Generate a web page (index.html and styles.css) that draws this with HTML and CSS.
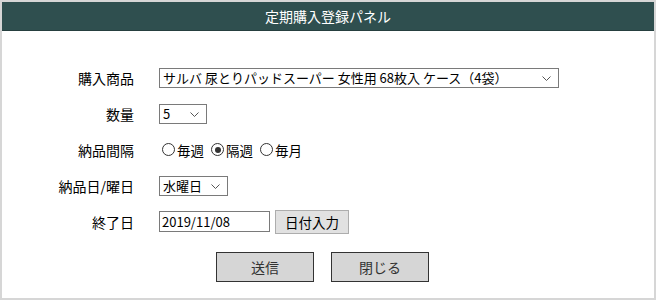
FILE: index.html
```html
<!DOCTYPE html>
<html lang="ja">
  <head>
    <meta charset="UTF-8" />
    <meta name="viewport" content="width=device-width, initial-scale=1.0" />
    <title>定期購入登録パネル</title>
    <link rel="stylesheet" href="styles.css">
  </head>
  <body>
    <div class="panel">
      <header class="panel_title">定期購入登録パネル</header>
      <form class="panel_body">
        <div class="rows">
          <label>購入商品</label>
          <div class="sel sel_item">
            <select>
              <option>サルバ 尿とりパッドスーパー 女性用 68枚入 ケース（4袋）</option>
            </select>
            <svg class="chev" width="9" height="5" viewBox="0 0 9 5"><path d="M0.5 0.5 L4.5 4.5 L8.5 0.5" fill="none" stroke="#555" stroke-width="1"/></svg>
          </div>

          <label>数量</label>
          <div class="sel sel_num">
            <select>
              <option>5</option>
            </select>
            <svg class="chev" width="9" height="5" viewBox="0 0 9 5"><path d="M0.5 0.5 L4.5 4.5 L8.5 0.5" fill="none" stroke="#555" stroke-width="1"/></svg>
          </div>

          <label>納品間隔</label>
          <div class="radios">
            <label class="radio"><input type="radio" name="span" />毎週</label>
            <label class="radio"><input type="radio" name="span" checked />隔週</label>
            <label class="radio"><input type="radio" name="span" />毎月</label>
          </div>

          <label>納品日/曜日</label>
          <div class="sel sel_day">
            <select>
              <option>水曜日</option>
            </select>
            <svg class="chev" width="9" height="5" viewBox="0 0 9 5"><path d="M0.5 0.5 L4.5 4.5 L8.5 0.5" fill="none" stroke="#555" stroke-width="1"/></svg>
          </div>

          <label>終了日</label>
          <div class="date">
            <input type="text" value="2019/11/08" />
            <button type="button" class="btn_small">日付入力</button>
          </div>
        </div>

        <div class="actions">
          <button type="button" class="btn">送信</button>
          <button type="button" class="btn">閉じる</button>
        </div>
      </form>
    </div>
  </body>
</html>
```

FILE: styles.css
```css
* {
  box-sizing: border-box;
}
body {
  margin: 0;
  font-family: "Noto Sans CJK JP", "Noto Sans", sans-serif;
  font-size: 13px;
  color: #000;
  background: #fff;
}

.panel {
  width: 656px;
  height: 300px;
  border: 2px solid #d6d6d6;
  background: #fff;
}
.panel_title {
  height: 29px;
  line-height: 28px;
  background: #2f4f4f;
  border-bottom: 1px solid #263f3f;
  color: #fff;
  font-size: 14px;
  text-align: center;
}

.panel_body {
  padding-top: 36px;
}
.rows {
  display: grid;
  grid-template-columns: 132px 1fr;
  grid-auto-rows: 21px;
  column-gap: 25px;
  row-gap: 15px;
  align-items: center;
}
.rows > label {
  text-align: right;
  font-size: 14px;
  line-height: 20px;
}

.sel {
  position: relative;
  height: 20px;
}
.sel select {
  appearance: none;
  -webkit-appearance: none;
  width: 100%;
  height: 20px;
  border: 1px solid #7a7a7a;
  border-radius: 0;
  background: #fff;
  font-family: inherit;
  font-size: 13px;
  color: #000;
  padding: 0 0 0 3px;
  line-height: 18px;
}
.sel .chev {
  position: absolute;
  right: 8px;
  top: 8px;
  pointer-events: none;
}
.sel_item {
  width: 400px;
}
.sel_num {
  width: 48px;
}
.sel_day {
  width: 69px;
}

.radios {
  display: flex;
  align-items: center;
  padding-left: 3px;
  gap: 7px;
}
.radio {
  display: flex;
  align-items: center;
  gap: 2px;
  font-size: 13.5px;
  line-height: 20px;
}
.radio input {
  appearance: none;
  -webkit-appearance: none;
  margin: 0;
  width: 13px;
  height: 13px;
  border: 1px solid #333;
  border-radius: 50%;
  background: #fff;
  position: relative;
}
.radio input:checked::after {
  content: "";
  position: absolute;
  left: 2.5px;
  top: 2.5px;
  width: 6px;
  height: 6px;
  border-radius: 50%;
  background: #333;
}

.date {
  display: flex;
  align-items: center;
  gap: 5px;
}
.date input {
  width: 111px;
  height: 21px;
  border: 1px solid #7a7a7a;
  font-family: inherit;
  font-size: 13px;
  padding: 0 2px;
  color: #000;
}
.btn_small {
  width: 74px;
  height: 24px;
  border: 1px solid #adadad;
  background: #e1e1e1;
  font-family: inherit;
  font-size: 13.5px;
  color: #000;
  padding: 0;
}

.actions {
  display: flex;
  justify-content: center;
  gap: 17px;
  margin-top: 20px;
  padding-right: 11px;
}
.btn {
  width: 98px;
  height: 30px;
  border: 1px solid #333;
  background: #d6d6d6;
  font-family: inherit;
  font-size: 14px;
  color: #333;
  padding: 0;
}
```
